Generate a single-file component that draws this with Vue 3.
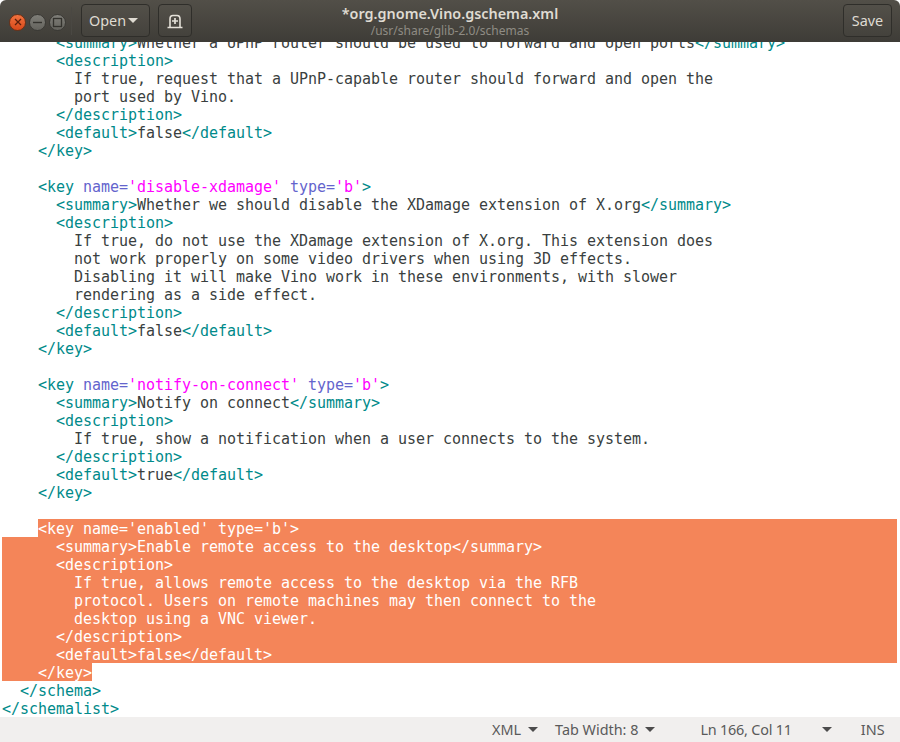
<script setup>
const T = (s) => ({ c: 't', s })
const X = (s) => ({ c: 'x', s })
const A = (s) => ({ c: 'a', s })
const V = (s) => ({ c: 'v', s })
const keyLine = (name, type) => [T("<key"), X(' '), A("name="), V(`'${name}'`), X(' '), A("type="), V(`'${type}'`), T('>')]
const lines = [
  { i: 6, p: [T('<summary>'), X('Whether a UPnP router should be used to forward and open ports'), T('</summary>')] },
  { i: 6, p: [T('<description>')] },
  { i: 8, p: [X('If true, request that a UPnP-capable router should forward and open the')] },
  { i: 8, p: [X('port used by Vino.')] },
  { i: 6, p: [T('</description>')] },
  { i: 6, p: [T('<default>'), X('false'), T('</default>')] },
  { i: 4, p: [T('</key>')] },
  { i: 0, p: [] },
  { i: 4, p: keyLine('disable-xdamage', 'b') },
  { i: 6, p: [T('<summary>'), X('Whether we should disable the XDamage extension of X.org'), T('</summary>')] },
  { i: 6, p: [T('<description>')] },
  { i: 8, p: [X('If true, do not use the XDamage extension of X.org. This extension does')] },
  { i: 8, p: [X('not work properly on some video drivers when using 3D effects.')] },
  { i: 8, p: [X('Disabling it will make Vino work in these environments, with slower')] },
  { i: 8, p: [X('rendering as a side effect.')] },
  { i: 6, p: [T('</description>')] },
  { i: 6, p: [T('<default>'), X('false'), T('</default>')] },
  { i: 4, p: [T('</key>')] },
  { i: 0, p: [] },
  { i: 4, p: keyLine('notify-on-connect', 'b') },
  { i: 6, p: [T('<summary>'), X('Notify on connect'), T('</summary>')] },
  { i: 6, p: [T('<description>')] },
  { i: 8, p: [X('If true, show a notification when a user connects to the system.')] },
  { i: 6, p: [T('</description>')] },
  { i: 6, p: [T('<default>'), X('true'), T('</default>')] },
  { i: 4, p: [T('</key>')] },
  { i: 0, p: [] },
  { i: 4, sel: 'first', p: keyLine('enabled', 'b') },
  { i: 6, sel: 'mid', p: [T('<summary>'), X('Enable remote access to the desktop'), T('</summary>')] },
  { i: 6, sel: 'mid', p: [T('<description>')] },
  { i: 8, sel: 'mid', p: [X('If true, allows remote access to the desktop via the RFB')] },
  { i: 8, sel: 'mid', p: [X('protocol. Users on remote machines may then connect to the')] },
  { i: 8, sel: 'mid', p: [X('desktop using a VNC viewer.')] },
  { i: 6, sel: 'mid', p: [T('</description>')] },
  { i: 6, sel: 'mid', p: [T('<default>'), X('false'), T('</default>')] },
  { i: 4, sel: 'last', p: [T('</key>')] },
  { i: 2, p: [T('</schema>')] },
  { i: 0, p: [T('</schemalist>')] },
]
const pad = (n) => ' '.repeat(n)
</script>

<template>
  <div class="win">
    <header class="bar">
      <div class="wm">
        <span class="wb close">
          <svg width="10" height="10" viewBox="0 0 10 10"><path d="M2 2l6 6M8 2l-6 6" stroke="#5a1f0c" stroke-width="1.3" fill="none"/></svg>
        </span>
        <span class="wb">
          <svg width="11" height="11" viewBox="0 0 11 11"><path d="M1 5.5h9" stroke="#33322d" stroke-width="1.4" fill="none"/></svg>
        </span>
        <span class="wb">
          <svg width="11" height="11" viewBox="0 0 11 11"><rect x="1.5" y="1.5" width="8" height="8" stroke="#33322d" stroke-width="1.3" fill="none"/></svg>
        </span>
      </div>
      <div class="sep"></div>
      <button class="btn open">Open<i class="arrow light"></i></button>
      <button class="btn newtab">
        <svg class="tabicon" width="16" height="16" viewBox="0 0 16 16">
          <path d="M0.5 14.5h15M3 14.5V6Q3 2.5 6 2.5h4Q13 2.5 13 6v8.5" stroke="#e4e0d8" stroke-width="1.6" fill="none"/>
          <path d="M8 5v6M5 8h6" stroke="#e4e0d8" stroke-width="1.7" fill="none"/>
        </svg>
      </button>
      <div class="title">
        <div class="t1">*org.gnome.Vino.gschema.xml</div>
        <div class="t2">/usr/share/glib-2.0/schemas</div>
      </div>
      <button class="btn save">Save</button>
    </header>

    <main class="editor">
      <div class="code">
        <div v-for="(l, n) in lines" :key="n" class="line">
          <template v-if="l.sel === 'first'">
            <span class="run">{{ pad(l.i) }}</span>
            <span class="run sel grow"><span v-for="(p, k) in l.p" :key="k">{{ p.s }}</span></span>
          </template>
          <template v-else-if="l.sel === 'mid'">
            <span class="run sel grow">{{ pad(l.i) }}<span v-for="(p, k) in l.p" :key="k">{{ p.s }}</span></span>
          </template>
          <template v-else-if="l.sel === 'last'">
            <span class="run sel">{{ pad(l.i) }}<span v-for="(p, k) in l.p" :key="k">{{ p.s }}</span></span>
          </template>
          <template v-else>
            <span class="run">{{ pad(l.i) }}<span v-for="(p, k) in l.p" :key="k" :class="p.c">{{ p.s }}</span></span>
          </template>
        </div>
      </div>
    </main>

    <footer class="status">
      <span class="st lang">XML<i class="arrow dark"></i></span>
      <span class="st tab">Tab Width: 8<i class="arrow dark"></i></span>
      <span class="st pos">Ln 166, Col 11</span>
      <i class="arrow dark solo"></i>
      <span class="st ins">INS</span>
    </footer>
  </div>
</template>

<style>
html, body { margin: 0; background: #2c2b28; }
</style>

<style scoped>
.win {
  width: 900px;
  height: 742px;
  display: flex;
  flex-direction: column;
  background: #fff;
  overflow: hidden;
}
.bar {
  height: 42px;
  flex: none;
  display: flex;
  align-items: center;
  position: relative;
  z-index: 1;
  background: linear-gradient(#524f48, #3e3c37);
  border-radius: 6px 6px 0 0;
  font-family: "Noto Sans", sans-serif;
}
.wm {
  display: flex;
  gap: 3px;
  margin-left: 9px;
  margin-top: 2px;
}
.wb {
  width: 17px;
  height: 17px;
  box-sizing: border-box;
  border-radius: 50%;
  background: linear-gradient(#7f7e78, #64635d);
  border: 1px solid #3a3935;
  display: flex;
  align-items: center;
  justify-content: center;
}
.wb.close { background: linear-gradient(#f1733f, #d8481a); border-color: #6d3016; }
.sep { width: 1px; height: 28px; background: #4a4843; margin-left: 5px; }
.btn {
  height: 33px;
  padding: 0;
  box-sizing: border-box;
  border: 1px solid #2f2e2a;
  border-radius: 4px;
  background: rgba(255, 255, 255, 0.02);
  color: #dfdbd2;
  font: 14.4px "Noto Sans", sans-serif;
  display: flex;
  align-items: center;
  justify-content: center;
}
.open { width: 69px; margin-left: 9px; gap: 2px; margin-top: -1px; padding-right: 4px; }
.newtab { width: 34px; margin-left: 8px; margin-top: -1px; }
.tabicon { margin-top: 1px; }
.save { width: 49px; margin-left: auto; margin-right: 8px; margin-top: -2px; }
.arrow {
  display: inline-block;
  width: 0;
  height: 0;
  border-left: 5px solid transparent;
  border-right: 5px solid transparent;
  border-top: 5px solid #dfdbd2;
}
.arrow.dark { border-top-color: #4c4c4c; margin-left: 7px; }
.title {
  position: absolute;
  left: 0;
  right: 0;
  top: 5px;
  text-align: center;
  pointer-events: none;
}
.t1 { font-size: 14.4px; font-weight: 600; color: #dfdbd2; line-height: 18px; }
.t2 { font-size: 12px; color: #8f8c84; line-height: 15px; }
.editor {
  flex: 1;
  min-height: 0;
  overflow: hidden;
  background: #fff;
}
.code {
  margin: -9px 3px 0 2px;
  font-family: "DejaVu Sans Mono", monospace;
  font-size: 15px;
  letter-spacing: -0.0315px;
  white-space: pre;
  color: #3a3f40;
}
.line { height: 18px; display: flex; }
.run { height: 18px; line-height: 20px; }
.grow { flex: 1; }
.sel { background: #f48559; color: #fff; }
.t { color: #008a8a; }
.x { color: #3a3f40; }
.a { color: #6464cd; }
.v { color: #f0f; }
.status {
  height: 25px;
  flex: none;
  display: flex;
  align-items: center;
  background: #f1efee;
  color: #5a5a5a;
  font: 14.4px "Noto Sans", sans-serif;
  padding-bottom: 1px;
  box-sizing: border-box;
}
.st { display: inline-flex; align-items: center; }
.lang { margin-left: 492px; }
.tab { margin-left: 17px; }
.pos { margin-left: 45px; letter-spacing: -0.2px; }
.arrow.dark.solo { margin-left: 30px; }
.ins { margin-left: 29px; }
</style>
